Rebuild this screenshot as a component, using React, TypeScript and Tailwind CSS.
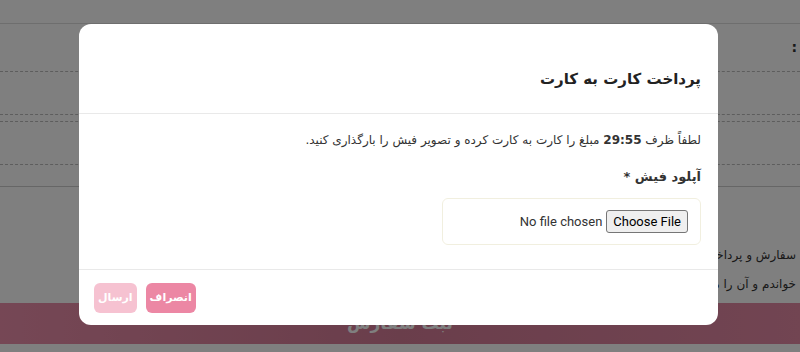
import { useState } from "react";

const font = { fontFamily: '"DejaVu Sans", "Noto Sans", sans-serif' };

function BackgroundPage() {
  return (
    <div className="min-h-[352px] overflow-hidden bg-white text-[12px] text-[#333]" dir="rtl">
      <div className="h-[24px] border-b border-[#ddd]" />
      <div className="h-[48px] border-b border-dashed border-[#bbb] pr-[3px] pt-[13px] text-[14px] font-bold">:</div>
      <div className="h-[43px] border-b border-dashed border-[#bbb]" />
      <div className="mt-[6px] h-[44px] border-y border-dashed border-[#bbb]" />
      <div className="h-[22px] border-b border-[#ccc]" />
      <div className="flex flex-col gap-[9px] pr-[4px] pt-[58px] whitespace-nowrap">
        <p className="leading-[20px]">سفارش و پرداخت، قوانین سایت را بخوانید</p>
        <p className="leading-[20px]">خواندم و آن را می پذیرم</p>
      </div>
      <div className="mt-[9px] flex h-[41px] items-center justify-center bg-gradient-to-l from-[#e48aa5] via-[#d57c97] to-[#ec8fab] text-[17px] font-bold text-white">
        ثبت سفارش
      </div>
    </div>
  );
}

export default function App() {
  const [file, setFile] = useState<string>("");

  return (
    <div className="relative h-[352px] w-[800px] overflow-hidden" style={font}>
      <BackgroundPage />
      <div className="absolute inset-0 bg-black/50" />
      <div
        className="absolute left-[79px] top-[24px] w-[639px] overflow-hidden rounded-[12px] bg-white text-[#333]"
        dir="rtl"
      >
        <div className="border-b border-[#e9e9e9] px-[17px] pb-[20px] pt-[41px]">
          <h2 className="text-[15px] font-bold leading-[28px] text-[#222]">پرداخت کارت به کارت</h2>
        </div>
        <div className="border-b border-[#e9e9e9] px-[17px] pb-[24px] pt-[16px]">
          <p className="text-[12px] leading-[20px]">
            لطفاً ظرف <span className="font-bold">29:55</span> مبلغ را کارت به کارت کرده و تصویر فیش را بارگذاری کنید.
          </p>
          <p className="mt-[17px] text-[13px] font-bold leading-[20px]">آپلود فیش *</p>
          <div className="mt-[11px] flex h-[47px] w-[259px] items-center rounded-[6px] border border-[#f1efdf] px-[12px]">
            <input
              className="text-[13px] text-[#333] file:ml-[4px] file:rounded-[3px] file:border file:border-[#767676] file:bg-[#efefef] file:px-[6px] file:py-[1px] file:text-[13px] file:text-black"
              onChange={(e) => setFile(e.target.value)}
              style={{ fontFamily: 'Roboto, "Liberation Sans", sans-serif' }}
              type="file"
              value={file}
            />
          </div>
        </div>
        <div className="flex justify-end gap-[9px] px-[15px] pb-[12px] pt-[13px]">
          <button className="h-[30px] rounded-[6px] bg-[#ec87a4] px-[4px] text-[11px] font-bold text-white">
            انصراف
          </button>
          <button className="h-[30px] rounded-[6px] bg-[#f6c2d1] px-[4px] text-[11px] font-bold text-white" disabled>
            ارسال
          </button>
        </div>
      </div>
    </div>
  );
}
